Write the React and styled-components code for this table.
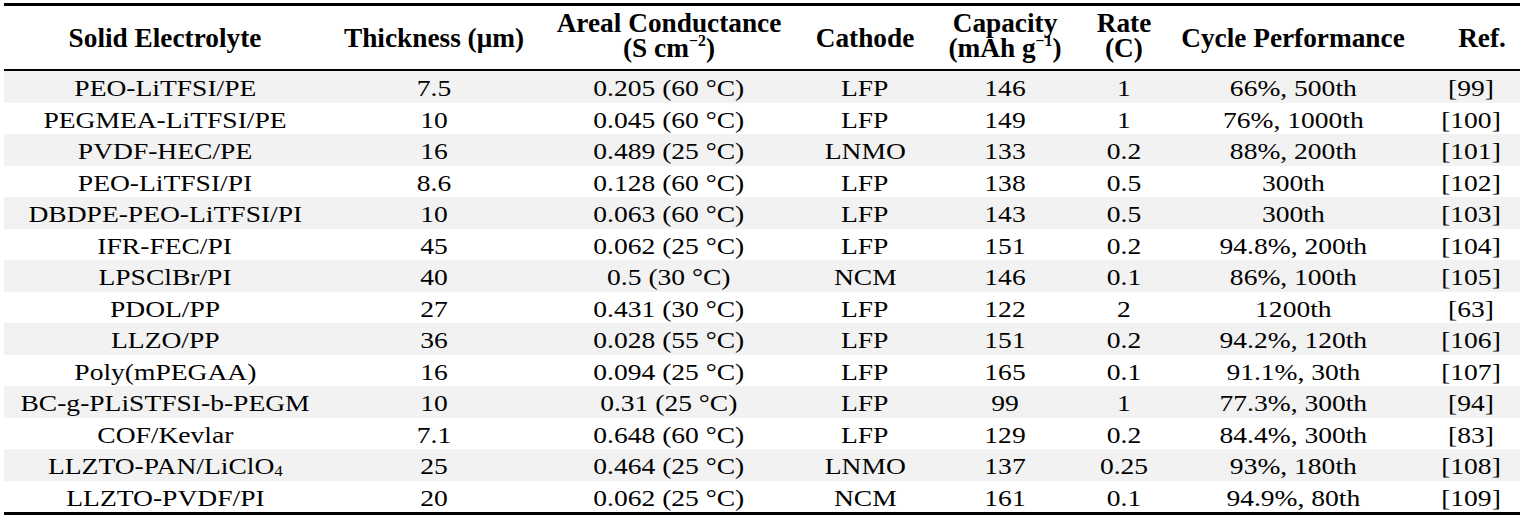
import styled, { createGlobalStyle } from "styled-components";

const GlobalStyle = createGlobalStyle`
  html, body {
    margin: 0;
    padding: 0;
    background: #ffffff;
  }
  body {
    font-family: "Liberation Serif", "Times New Roman", serif;
    color: #000000;
  }
`;

// column widths in screen pixels
const COLUMNS = "322px 216px 254px 138px 142px 96px 242px 106px";

const Table = styled.div`
  width: 1516px;
  margin: 3px 4px 0;
  border-top: 3px solid #000;
  border-bottom: 3px solid #000;
`;

const HeadRow = styled.div`
  display: grid;
  grid-template-columns: ${COLUMNS};
  height: 63px;
  border-bottom: 2px solid #000;
  font-weight: 700;
  font-size: 27.3px;
  line-height: 25px;
`;

const Row = styled.div`
  display: grid;
  grid-template-columns: ${COLUMNS};
  height: 31.5px;
  background: ${({ $shaded }) => ($shaded ? "#f2f2f2" : "#ffffff")};
  font-size: 24px;
  line-height: 27.5px;
`;

const Cell = styled.div`
  display: flex;
  align-items: center;
  justify-content: center;
  text-align: center;
  box-sizing: border-box;
  padding-top: ${({ $top }) => $top || 0}px;
  padding-bottom: ${({ $bottom }) => $bottom || 0}px;
  padding-left: ${({ $shift }) => $shift || 0}px;
`;

const HeadLabel = styled.span`
  display: inline-block;
  white-space: nowrap;
`;

// body glyphs in the source are drawn a little wider than Times
const Label = styled.span`
  display: inline-block;
  white-space: nowrap;
  transform: scaleX(1.147);
`;

const Sup = styled.sup`
  font-size: 0.58em;
  line-height: 0;
  vertical-align: 0.72em;
`;

const Sub = styled.sub`
  font-size: 0.62em;
  line-height: 0;
  vertical-align: -0.12em;
`;

const rows = [
  ["PEO-LiTFSI/PE", "7.5", "0.205 (60 °C)", "LFP", "146", "1", "66%, 500th", "[99]"],
  ["PEGMEA-LiTFSI/PE", "10", "0.045 (60 °C)", "LFP", "149", "1", "76%, 1000th", "[100]"],
  ["PVDF-HEC/PE", "16", "0.489 (25 °C)", "LNMO", "133", "0.2", "88%, 200th", "[101]"],
  ["PEO-LiTFSI/PI", "8.6", "0.128 (60 °C)", "LFP", "138", "0.5", "300th", "[102]"],
  ["DBDPE-PEO-LiTFSI/PI", "10", "0.063 (60 °C)", "LFP", "143", "0.5", "300th", "[103]"],
  ["IFR-FEC/PI", "45", "0.062 (25 °C)", "LFP", "151", "0.2", "94.8%, 200th", "[104]"],
  ["LPSClBr/PI", "40", "0.5 (30 °C)", "NCM", "146", "0.1", "86%, 100th", "[105]"],
  ["PDOL/PP", "27", "0.431 (30 °C)", "LFP", "122", "2", "1200th", "[63]"],
  ["LLZO/PP", "36", "0.028 (55 °C)", "LFP", "151", "0.2", "94.2%, 120th", "[106]"],
  ["Poly(mPEGAA)", "16", "0.094 (25 °C)", "LFP", "165", "0.1", "91.1%, 30th", "[107]"],
  ["BC-g-PLiSTFSI-b-PEGM", "10", "0.31 (25 °C)", "LFP", "99", "1", "77.3%, 300th", "[94]"],
  ["COF/Kevlar", "7.1", "0.648 (60 °C)", "LFP", "129", "0.2", "84.4%, 300th", "[83]"],
  [
    <>
      LLZTO-PAN/LiClO<Sub>4</Sub>
    </>,
    "25",
    "0.464 (25 °C)",
    "LNMO",
    "137",
    "0.25",
    "93%, 180th",
    "[108]",
  ],
  ["LLZTO-PVDF/PI", "20", "0.062 (25 °C)", "NCM", "161", "0.1", "94.9%, 80th", "[109]"],
];

export default function App() {
  return (
    <>
      <GlobalStyle />
      <Table>
        <HeadRow>
          <Cell $top={2}>
            <HeadLabel>Solid Electrolyte</HeadLabel>
          </Cell>
          <Cell $top={2}>
            <HeadLabel>Thickness (μm)</HeadLabel>
          </Cell>
          <Cell $bottom={4}>
            <HeadLabel>
              Areal Conductance
              <br />
              (S cm<Sup>−2</Sup>)
            </HeadLabel>
          </Cell>
          <Cell $top={2}>
            <HeadLabel>Cathode</HeadLabel>
          </Cell>
          <Cell $bottom={4}>
            <HeadLabel>
              Capacity
              <br />
              (mAh g<Sup>−1</Sup>)
            </HeadLabel>
          </Cell>
          <Cell $bottom={4}>
            <HeadLabel>
              Rate
              <br />
              (C)
            </HeadLabel>
          </Cell>
          <Cell $top={2}>
            <HeadLabel>Cycle Performance</HeadLabel>
          </Cell>
          <Cell $top={2} $shift={30}>
            <HeadLabel>Ref.</HeadLabel>
          </Cell>
        </HeadRow>
        {rows.map((row, i) => (
          <Row key={i} $shaded={i % 2 === 0}>
            {row.map((value, j) => (
              <Cell key={j} $top={4} $shift={j === 7 ? 8 : 0}>
                <Label>{value}</Label>
              </Cell>
            ))}
          </Row>
        ))}
      </Table>
    </>
  );
}
